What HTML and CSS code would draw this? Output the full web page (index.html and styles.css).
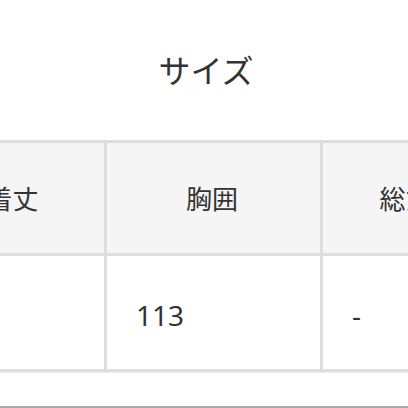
FILE: index.html
```html
<!DOCTYPE html>
<html lang="ja">
<head>
<meta charset="utf-8">
<link rel="stylesheet" href="styles.css">
</head>
<body>
<div class="page">
  <div class="title">サイズ</div>
  <div class="grid">
    <div class="cell head">着丈</div>
    <div class="cell head">胸囲</div>
    <div class="cell head">総丈</div>
    <div class="cell head">袖丈</div>
    <div class="cell body-cell"></div>
    <div class="cell body-cell">113</div>
    <div class="cell body-cell">-</div>
    <div class="cell body-cell"></div>
  </div>
  <div class="spacer"></div>
  <div class="rule"></div>
</div>
</body>
</html>
```

FILE: styles.css
```css
html, body {
  margin: 0;
  padding: 0;
  background: #ffffff;
}
body {
  width: 408px;
  height: 408px;
  overflow: hidden;
  font-family: "Noto Sans CJK JP", "Noto Sans", sans-serif;
  color: #333333;
}
.page {
  display: flex;
  flex-direction: column;
  width: 408px;
}
.title {
  height: 140px;
  display: flex;
  align-items: center;
  justify-content: center;
  font-size: 32px;
  line-height: 1;
  padding-left: 4px;
  padding-bottom: 2px;
  box-sizing: border-box;
}
.grid {
  display: grid;
  grid-template-columns: 183px 216px 171px 153px;
  border-top: 3px solid #dddddd;
  margin-left: -76px;
  width: max-content;
}
.cell {
  border-right: 3px solid #dddddd;
  border-bottom: 3px solid #dddddd;
  display: flex;
  align-items: center;
  box-sizing: border-box;
}
.head {
  height: 113px;
  background: #f5f5f5;
  justify-content: center;
  font-size: 26px;
  line-height: 1;
  padding-right: 3px;
}
.body-cell {
  height: 116px;
  background: #ffffff;
  padding-left: 29px;
  padding-top: 4px;
  font-family: "Noto Sans", "Noto Sans CJK JP", sans-serif;
  font-size: 28px;
  line-height: 1;
}
.spacer {
  height: 34px;
  border-top: 1px solid #f0f0f0;
  box-sizing: border-box;
}
.rule {
  height: 2px;
  background: #a8a8a8;
}
```
